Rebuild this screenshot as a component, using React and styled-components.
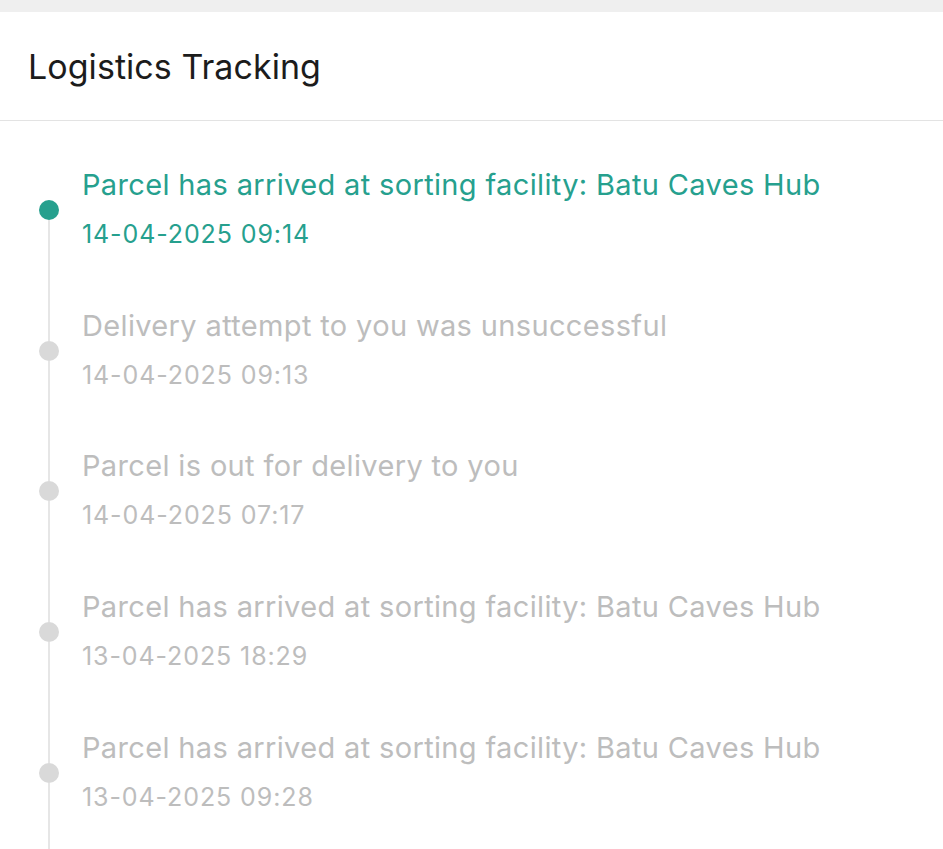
import React from "react";
import styled, { createGlobalStyle } from "styled-components";

const Global = createGlobalStyle`
  html, body { margin: 0; padding: 0; background: #ffffff; }
  body { font-family: Inter, "Noto Sans", "Liberation Sans", sans-serif; -webkit-font-smoothing: antialiased; }
`;

const Page = styled.div`
  display: flex;
  flex-direction: column;
  min-height: 100vh;
  background: #fff;
`;

const TopStrip = styled.div`
  height: 12px;
  background: #efefef;
`;

const Header = styled.header`
  height: 109px;
  display: flex;
  align-items: center;
  padding-left: 28px;
  border-bottom: 1px solid #e3e3e3;
  box-sizing: border-box;
`;

const Title = styled.h1`
  margin: 0;
  font-size: 34px;
  font-weight: 400;
  color: #1c1c1c;
  letter-spacing: 0.05px;
`;

const List = styled.ol`
  flex: 1;
  display: flex;
  flex-direction: column;
  list-style: none;
  margin: 0;
  padding: 19px 0 0 0;
`;

const Item = styled.li`
  display: grid;
  grid-template-columns: 82px 1fr;
  height: 140.6px;
  flex: none;
`;

const Rail = styled.div`
  display: flex;
  flex-direction: column;
  align-items: flex-start;
  padding-left: 39px;
`;

const Segment = styled.div`
  flex: 1;
  width: 2px;
  margin-left: 9px;
  background: ${(p) => (p.$hidden ? "transparent" : "#e6e6e6")};
`;

const Tail = styled.li`
  flex: 1;
  width: 2px;
  margin-left: 48px;
  background: #e6e6e6;
`;

const Dot = styled.div`
  width: 20px;
  height: 20px;
  border-radius: 50%;
  flex: none;
  background: ${(p) => (p.$active ? "#26a08e" : "#d9d9d9")};
`;

const Content = styled.div`
  display: flex;
  flex-direction: column;
  justify-content: center;
  color: ${(p) => (p.$active ? "#26a08e" : "#bdbdbd")};
`;

const Event = styled.div`
  font-size: 29px;
  line-height: 48px;
  letter-spacing: 0.35px;
  white-space: nowrap;
`;

const Time = styled.div`
  font-size: 25px;
  line-height: 50px;
  letter-spacing: 0.9px;
  white-space: nowrap;
`;

const events = [
  { text: "Parcel has arrived at sorting facility: Batu Caves Hub", time: "14-04-2025 09:14" },
  { text: "Delivery attempt to you was unsuccessful", time: "14-04-2025 09:13" },
  { text: "Parcel is out for delivery to you", time: "14-04-2025 07:17" },
  { text: "Parcel has arrived at sorting facility: Batu Caves Hub", time: "13-04-2025 18:29" },
  { text: "Parcel has arrived at sorting facility: Batu Caves Hub", time: "13-04-2025 09:28" },
];

export default function App() {
  return (
    <Page>
      <Global />
      <TopStrip />
      <Header>
        <Title>Logistics Tracking</Title>
      </Header>
      <List>
        {events.map((e, i) => (
          <Item key={i}>
            <Rail>
              <Segment $hidden={i === 0} />
              <Dot $active={i === 0} />
              <Segment />
            </Rail>
            <Content $active={i === 0}>
              <Event>{e.text}</Event>
              <Time>{e.time}</Time>
            </Content>
          </Item>
        ))}
        <Tail aria-hidden="true" />
      </List>
    </Page>
  );
}
